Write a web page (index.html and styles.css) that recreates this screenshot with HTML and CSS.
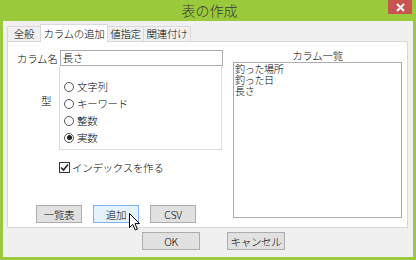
FILE: index.html
```html
<!DOCTYPE html>
<html lang="ja">
<head>
    <meta charset="UTF-8">
    <title>表の作成</title>
    <link rel="stylesheet" href="styles.css">
</head>
<body>
    <div class="window">
        <!-- Title bar -->
        <div class="titlebar">
            <span></span>
            <span class="title">表の作成</span>
            <span class="close-btn">
                <svg width="9" height="9" viewBox="0 0 9 9"><path d="M1 1 L8 8 M8 1 L1 8" stroke="#fff" stroke-width="2"/></svg>
            </span>
        </div>

        <div class="client">
            <div class="tabs">
                <div class="tab tab-general">全般</div>
                <div class="tab tab-add active">カラムの追加</div>
                <div class="tab tab-value">値指定</div>
                <div class="tab tab-link">関連付け</div>
            </div>

            <div class="tab-panel">
                <div class="left-col">
                    <div class="name-row">
                        <span class="field-label">カラム名</span>
                        <div class="text-input">長さ</div>
                    </div>

                    <div class="type-row">
                        <span class="type-label">型</span>
                        <div class="group-box">
                            <div class="radio"><span class="radio-dot"></span>文字列</div>
                            <div class="radio"><span class="radio-dot"></span>キーワード</div>
                            <div class="radio"><span class="radio-dot"></span>整数</div>
                            <div class="radio"><span class="radio-dot checked"></span>実数</div>
                        </div>
                    </div>

                    <div class="check-row">
                        <span class="check-box">
                            <svg width="9" height="9" viewBox="0 0 9 9"><path d="M1 4.5 L3.5 7 L8 1.5" fill="none" stroke="#222" stroke-width="1.6"/></svg>
                        </span>
                        インデックスを作る
                    </div>

                    <div class="btn-row">
                        <button class="btn">一覧表</button>
                        <button class="btn hover">追加</button>
                        <button class="btn">CSV</button>
                    </div>
                </div>

                <div class="right-col">
                    <div class="list-title">カラム一覧</div>
                    <div class="list-box">
                        <div class="list-item">釣った場所</div>
                        <div class="list-item">釣った日</div>
                        <div class="list-item">長さ</div>
                    </div>
                </div>
            </div>

            <div class="dialog-buttons">
                <button class="btn wide">OK</button>
                <button class="btn wide">キャンセル</button>
            </div>
        </div>

        <!-- Mouse pointer over the 追加 button -->
        <svg class="cursor" width="12" height="18" viewBox="0 0 12 18">
            <path d="M0.5 0.5 L0.5 14.5 L3.8 11.4 L6.2 17 L8.3 16.1 L6 10.6 L10.5 10.6 Z" fill="#fff" stroke="#000" stroke-width="1"/>
        </svg>
    </div>
</body>
</html>
```

FILE: styles.css
```css
/* Window frame */
body {
    margin: 0;
    font-family: "Noto Sans CJK JP", "Noto Sans", sans-serif;
    font-size: 10.5px;
    font-weight: 300;
    letter-spacing: -0.3px;
    color: #000;
}

.window {
    position: relative;
    width: 416px;
    height: 260px;
    box-sizing: border-box;
    background: #9bc93c;
    padding: 0 3px 3px 3px;
    display: flex;
    flex-direction: column;
}

.titlebar {
    height: 21px;
    display: grid;
    grid-template-columns: 1fr auto 1fr;
    align-items: start;
}

.title {
    font-size: 14px;
    line-height: 21px;
    color: #3a3a3a;
    margin-left: 3px;
    letter-spacing: 0;
}

.close-btn {
    justify-self: end;
    width: 24px;
    height: 14px;
    background: #c75450;
    display: flex;
    align-items: center;
    justify-content: center;
    margin-right: 1px;
}

.client {
    flex: 1;
    background: #f0f0f0;
    padding: 3px 4px 0 4px;
    display: flex;
    flex-direction: column;
}

/* Tabs */
.tabs {
    display: flex;
    align-items: flex-end;
    height: 17px;
}

.tab {
    height: 14px;
    line-height: 14px;
    box-sizing: content-box;
    border: 1px solid #d9d9d9;
    border-bottom: none;
    background: #f0f0f0;
    text-align: center;
    margin-left: -1px;
}

.tab-general {
    width: 32px;
    margin-left: 0;
}

.tab-add {
    width: 66px;
}

.tab-value {
    width: 35px;
}

.tab-link {
    width: 46px;
}

.tab.active {
    height: 17px;
    line-height: 17px;
    background: #fff;
    position: relative;
    z-index: 1;
    margin-bottom: -1px;
}

.tab-panel {
    height: 187px;
    width: 401px;
    box-sizing: border-box;
    background: #fff;
    border: 1px solid #d9d9d9;
    display: flex;
    padding: 8px 0 0 9px;
}

/* Left column */
.left-col {
    width: 206px;
}

.name-row {
    display: flex;
    align-items: center;
    height: 16px;
}

.field-label {
    width: 43px;
    white-space: nowrap;
}

.text-input {
    width: 160px;
    height: 14px;
    line-height: 14px;
    border: 1px solid #abadb3;
    padding-left: 2px;
}

.type-row {
    display: flex;
    align-items: center;
}

.type-label {
    width: 18px;
    padding-left: 24px;
    margin-top: -16px;
}

.group-box {
    width: 163px;
    height: 84px;
    box-sizing: border-box;
    border: 1px solid #dcdcdc;
    border-top: none;
    padding: 12px 0 0 4px;
}

.radio {
    display: flex;
    align-items: center;
    height: 17px;
    gap: 3px;
}

.radio-dot {
    width: 10px;
    height: 10px;
    border: 1px solid #555;
    border-radius: 50%;
    box-sizing: border-box;
    display: inline-flex;
    align-items: center;
    justify-content: center;
    background: #fff;
}

.radio-dot.checked::after {
    content: "";
    width: 5px;
    height: 5px;
    border-radius: 50%;
    background: #222;
}

.check-row {
    display: flex;
    align-items: center;
    gap: 2px;
    margin: 11px 0 0 42px;
    height: 13px;
}

.check-box {
    width: 11px;
    height: 11px;
    box-sizing: border-box;
    border: 1px solid #333;
    display: inline-flex;
    align-items: center;
    justify-content: center;
}

.btn-row {
    display: flex;
    gap: 11px;
    margin: 31px 0 0 19px;
}

/* Buttons */
.btn {
    width: 46px;
    height: 18px;
    padding: 0;
    font-family: inherit;
    font-size: 10.5px;
    font-weight: 300;
    letter-spacing: -0.3px;
    color: #000;
    background: #e1e1e1;
    border: 1px solid #adadad;
}

.btn.hover {
    background: #e5f1fb;
    border-color: #7eb4ea;
}

.btn.wide {
    width: 58px;
}

/* Right column */
.right-col {
    margin-left: 10px;
    width: 169px;
}

.list-title {
    text-align: center;
    height: 12px;
    line-height: 12px;
}

.list-box {
    height: 156px;
    box-sizing: border-box;
    border: 1px solid #adadad;
    padding: 0 0 0 1px;
}

.list-item {
    height: 11px;
    line-height: 11px;
    font-size: 10px;
}

.dialog-buttons {
    display: flex;
    gap: 27px;
    margin: 4px 0 0 135px;
}

.cursor {
    position: absolute;
    left: 129px;
    top: 213px;
}
```
